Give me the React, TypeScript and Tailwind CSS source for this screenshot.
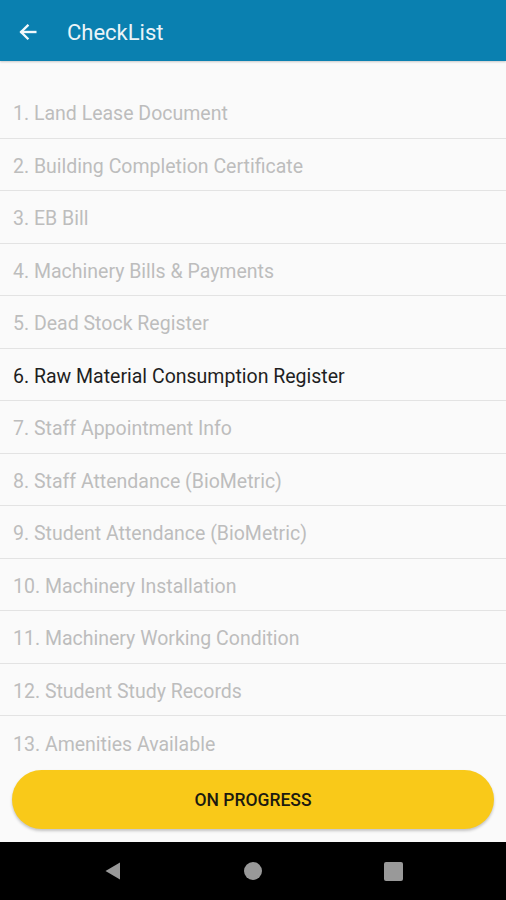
const items = [
  'Land Lease Document',
  'Building Completion Certificate',
  'EB Bill',
  'Machinery Bills & Payments',
  'Dead Stock Register',
  'Raw Material Consumption Register',
  'Staff Appointment Info',
  'Staff Attendance (BioMetric)',
  'Student Attendance (BioMetric)',
  'Machinery Installation',
  'Machinery Working Condition',
  'Student Study Records',
  'Amenities Available',
];

const ACTIVE = 5;

export default function App() {
  return (
    <div
      className="flex h-[900px] w-full flex-col overflow-hidden bg-[#fafafa]"
      style={{ fontFamily: 'Roboto, "Noto Sans", sans-serif' }}
    >
      {/* App bar */}
      <header className="flex h-[61px] shrink-0 items-center bg-[#0a80b0] pt-[3px] shadow-[0_1px_2px_rgba(0,0,0,0.2)]">
        <div className="flex w-[54px] justify-center pl-[1px]">
          <svg width="22" height="22" viewBox="0 0 24 24" fill="none" stroke="#f2f8fb" strokeWidth={2.6} strokeLinecap="square">
            <path d="M20 12H5" />
            <path d="M11.5 5L4.5 12l7 7" strokeLinejoin="miter" />
          </svg>
        </div>
        <h1 className="pl-[13px] text-[22px] font-normal text-[#eaf4f8]">CheckList</h1>
      </header>

      {/* List */}
      <ul className="pt-[25px]">
        {items.map((label, i) => (
          <li
            key={label}
            className={`flex h-[52.5px] items-center px-[13px] pt-[4px] text-[19.5px] ${
              i < items.length - 1 ? 'border-b border-[#e3e3e3]' : ''
            } ${i === ACTIVE ? 'text-[#1f1f1f]' : 'text-[#bdbdbd]'}`}
          >
            {i + 1}. {label}
          </li>
        ))}
      </ul>

      <div className="px-[12px] pt-[1.5px]">
        <button className="flex h-[59px] w-full items-center justify-center rounded-full bg-[#f9c919] pt-[2px] text-[17.5px] font-medium text-[#1c1a10] shadow-[0_2px_3px_rgba(0,0,0,0.22)]">
          ON PROGRESS
        </button>
      </div>

      <div className="flex-1" />

      {/* System nav bar */}
      <nav className="flex h-[58px] shrink-0 items-center justify-center bg-black">
        <div className="flex items-center">
          <svg width="20" height="20" viewBox="0 0 20 20">
            <path d="M17 1.5v17L2.5 10z" fill="#999" />
          </svg>
          <div className="ml-[121px] h-[18px] w-[18px] rounded-full bg-[#999]" />
          <div className="ml-[122px] h-[19px] w-[19px] rounded-[2px] bg-[#999]" />
        </div>
      </nav>
    </div>
  );
}
